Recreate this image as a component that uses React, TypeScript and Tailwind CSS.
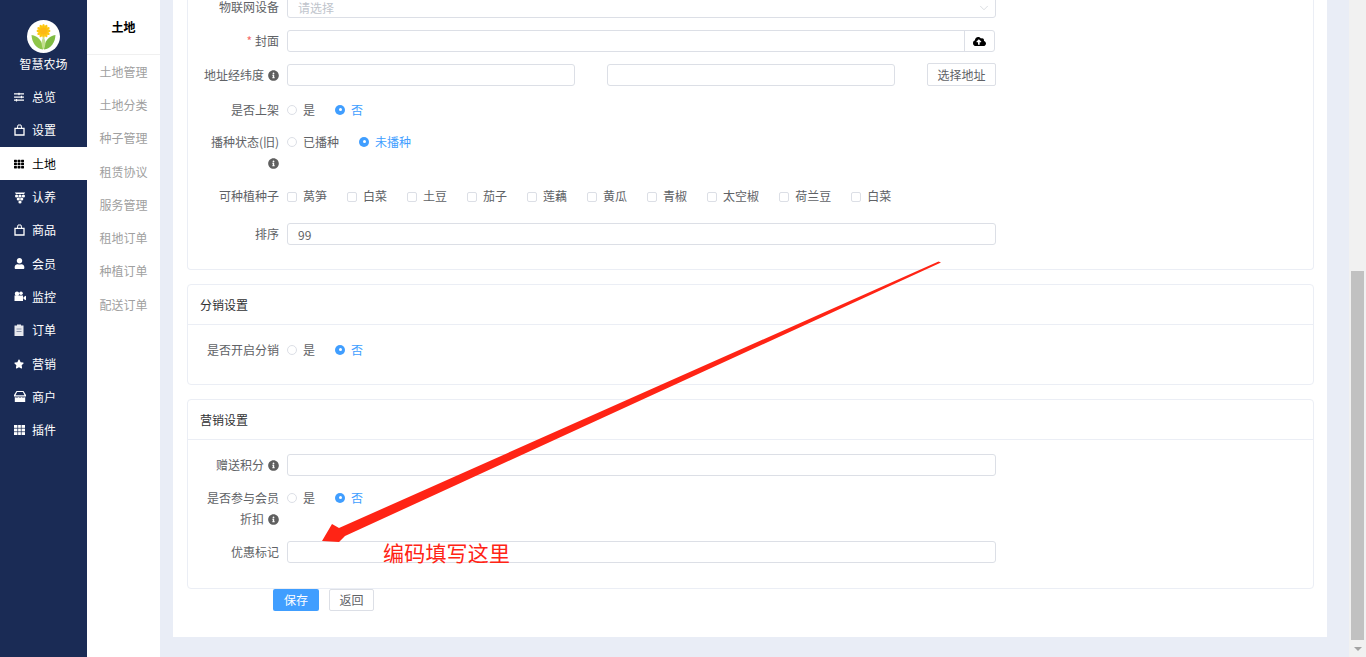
import React from "react";
import { FaSlidersH, FaTh, FaUser, FaStar, FaInfoCircle, FaCloudUploadAlt } from "react-icons/fa";
import { ChevronDown } from "lucide-react";

const Bag = () => (
  <svg viewBox="0 0 11 12" className="h-[12px] w-[11px]" fill="none" stroke="currentColor">
    <path d="M1 4.300h9v6.700H1z" strokeWidth="1.300" />
    <path d="M3.300 4.300 4 1h3l.7 3.300" strokeWidth="1" />
  </svg>
);
const Grape = () => (
  <svg viewBox="0 0 12 13" className="h-[13px] w-[12px]" fill="currentColor">
    <path d="M.8 1.500h10.400L10 3H2z" />
    <circle cx="2.600" cy="5" r="1.600" /><circle cx="6" cy="5" r="1.600" /><circle cx="9.400" cy="5" r="1.600" />
    <circle cx="4.300" cy="8" r="1.600" /><circle cx="7.700" cy="8" r="1.600" /><circle cx="6" cy="11" r="1.600" />
  </svg>
);
const Store = () => (
  <svg viewBox="0 0 12 11" className="h-[11px] w-[12px]" fill="currentColor">
    <path d="M2.500 0h7l2.500 4v1.500H0V4zM3.100 1.100 1.500 4.200h9L8.900 1.100z" />
    <path d="M.8 6c1.300.8 2.800.8 3.600 0 .9.8 2.300.8 3.200 0 .8.8 2.300.8 3.600 0v5H.8z" />
  </svg>
);
const Camera = () => (
  <svg viewBox="0 0 12 11" className="h-[11px] w-[12px]" fill="currentColor">
    <circle cx="3" cy="2.800" r="2.200" /><circle cx="7" cy="2.300" r="1.800" />
    <path d="M.5 4.500h8.500v5.500H.5z" />
    <path d="M9.500 6 12 4.800v4.400L9.500 8z" />
  </svg>
);
const Clip = () => (
  <svg viewBox="0 0 10 12" className="h-[12px] w-[10px]">
    <path d="M.5 1.500h2.500V.5h4v1h2.500V12H.5z" fill="#e6e8ee" />
    <path d="M2.500 5h5M2.500 7.500h5" stroke="#8a93aa" strokeWidth="1" />
  </svg>
);
const Grid = () => (
  <svg viewBox="0 0 11 10" className="h-[10px] w-[11px]">
    <path d="M0 0h11v10H0z" fill="#fff" />
    <path d="M3.700 0v10M7.300 0v10M0 3.300h11M0 6.700h11" stroke="#1a2b55" strokeWidth=".7" />
  </svg>
);

const navItems: [string, React.ReactNode][] = [
  ["总览", <FaSlidersH size={10} />],
  ["设置", <Bag />],
  ["土地", <FaTh size={10} />],
  ["认养", <Grape />],
  ["商品", <Bag />],
  ["会员", <FaUser size={11} />],
  ["监控", <Camera />],
  ["订单", <Clip />],
  ["营销", <FaStar size={10} />],
  ["商户", <Store />],
  ["插件", <Grid />],
];

const subItems = ["土地管理", "土地分类", "种子管理", "租赁协议", "服务管理", "租地订单", "种植订单", "配送订单"];
const seeds = ["莴笋", "白菜", "土豆", "茄子", "莲藕", "黄瓜", "青椒", "太空椒", "荷兰豆", "白菜"];

const Info = () => <FaInfoCircle size={11} className="ml-[4px] inline-block align-[-1px] text-[#5f5f5f]" />;

const Label = ({ children }: { children: React.ReactNode }) => (
  <div className="w-[80px] shrink-0 text-right text-[12px] leading-[21px] text-[#606266]">{children}</div>
);

const TextInput = ({ value, placeholder, className }: { value?: string; placeholder?: string; className: string }) => (
  <input
    readOnly
    value={value ?? ""}
    placeholder={placeholder}
    className={`block h-[22px] rounded-[3px] border border-[#dcdfe6] bg-white px-[10px] text-[12px] text-[#606266] outline-none placeholder:text-[#c0c4cc] ${className}`}
  />
);

const Radio = ({ label, checked }: { label: string; checked?: boolean }) => (
  <div className={`flex items-center gap-[6px] text-[12px] leading-[21px] ${checked ? "text-[#409eff]" : "text-[#606266]"}`}>
    {checked ? (
      <span className="flex h-[10px] w-[10px] items-center justify-center rounded-full bg-[#409eff]">
        <span className="h-[3px] w-[3px] rounded-full bg-white" />
      </span>
    ) : (
      <span className="h-[10px] w-[10px] rounded-full border border-[#dcdfe6] bg-white" />
    )}
    {label}
  </div>
);

const RadioGroup = ({ a, b }: { a: string; b: string }) => (
  <div className="flex items-center gap-[20px]">
    <Radio label={a} />
    <Radio label={b} checked />
  </div>
);

const Row = ({ label, children, className }: { label: React.ReactNode; children: React.ReactNode; className?: string }) => (
  <div className={`flex items-start gap-[8px] ${className ?? ""}`}>
    <Label>{label}</Label>
    {children}
  </div>
);

const Card = ({ title, children, className }: { title?: string; children: React.ReactNode; className?: string }) => (
  <div className={`rounded-[4px] border border-[#ebeef5] bg-white ${className ?? ""}`}>
    {title && (
      <div className="flex h-[40px] items-center border-b border-[#ebeef5] px-[12px] text-[12px] text-[#303133]">{title}</div>
    )}
    <div className="px-[11px]">{children}</div>
  </div>
);

const Logo = () => (
  <svg viewBox="0 0 33 33" className="h-[33px] w-[33px]">
    <circle cx="16.500" cy="16.500" r="16.500" fill="#fff" />
    {[0, 30, 60, 90, 120, 150, 180, 210, 240, 270, 300, 330].map((r) => (
      <ellipse key={r} cx="16.500" cy="6.500" rx="1.400" ry="2.500" fill="#fdc60f" transform={`rotate(${r} 16.500 11)`} />
    ))}
    <circle cx="16.500" cy="11" r="3.500" fill="#fcb814" />
    <path d="M16 29.500C9 29 4.800 22 4.500 15c6.500 1 11.500 6 11.500 14.500z" fill="#8fc649" />
    <path d="M17 29.500c7-.5 11.200-7.500 11.500-14.500C22 16 17 21 17 29.500z" fill="#7fbb42" />
    <path d="M16.500 29.500c-2.500-4-2.500-9 0-13 2.500 4 2.500 9 0 13z" fill="#c3df8e" />
  </svg>
);

export default function App() {
  return (
    <div className="relative flex h-[657px] w-[1366px] overflow-hidden bg-[#e9edf6] font-['Noto_Sans_CJK_SC',sans-serif]">
      {/* primary nav */}
      <aside className="flex w-[87px] shrink-0 flex-col bg-[#1a2b55] text-white">
        <div className="flex h-[80.500px] flex-col items-center pt-[20px]">
          <Logo />
          <div className="mt-[3px] text-[12px] leading-[16px]">智慧农场</div>
        </div>
        {navItems.map(([name, icon], i) => (
          <div
            key={i}
            className={`flex h-[33.300px] items-center text-[12px] ${name === "土地" ? "bg-white text-black" : "text-white"}`}
          >
            <span className="flex w-[32px] items-center pl-[14px]">{icon}</span>
            {name}
          </div>
        ))}
      </aside>

      {/* secondary nav */}
      <nav className="w-[73px] shrink-0 bg-white text-center">
        <div className="flex h-[55px] items-center justify-center border-b border-[#f0f0f0] text-[12px] font-bold text-black">土地</div>
        {subItems.map((s) => (
          <div key={s} className="flex h-[33.300px] items-center justify-center text-[12px] text-[#a0a0a0]">{s}</div>
        ))}
      </nav>

      {/* content */}
      <main className="min-w-0 flex-1 pl-[13px] pr-[22px]">
        <div className="-mt-[4px] h-[641px] bg-white pl-[14px] pr-[13px]">
          {/* base info */}
          <Card className="h-[274px] rounded-t-none border-t-0">
            <Row label="物联网设备">
              <div className="relative">
                <TextInput placeholder="请选择" className="w-[709px]" />
                <ChevronDown size={14} strokeWidth={1} className="absolute right-[5px] top-[5px] text-[#c0c4cc]" />
              </div>
            </Row>
            <Row label={<><span className="mr-[3px] text-[#f56c6c]">*</span>封面</>} className="mt-[12px]">
              <div className="flex h-[22px] w-[708px] rounded-[3px] border border-[#dcdfe6]">
                <div className="flex-1" />
                <div className="flex w-[30px] items-center justify-center border-l border-[#dcdfe6] text-black">
                  <FaCloudUploadAlt size={13} />
                </div>
              </div>
            </Row>
            <Row label={<>地址经纬度<Info /></>} className="mt-[12px]">
              <TextInput className="w-[288px]" />
              <TextInput className="ml-[24px] w-[288px]" />
              <button className="ml-[24px] -mt-[1px] h-[23px] w-[69px] rounded-[2px] border border-[#dcdfe6] bg-white text-[12px] text-[#606266]">选择地址</button>
            </Row>
            <Row label="是否上架" className="mt-[13px]">
              <RadioGroup a="是" b="否" />
            </Row>
            <Row label={<>播种状态(旧)<Info /></>} className="mt-[11px]">
              <RadioGroup a="已播种" b="未播种" />
            </Row>
            <Row label="可种植种子" className="mt-[12px]">
              <div className="flex gap-[20px]">
                {seeds.map((s, i) => (
                  <div key={i} className="flex items-center gap-[5px] text-[12px] leading-[21px] text-[#606266]">
                    <span className="mr-[1px] mt-[2px] h-[10px] w-[10px] rounded-[2px] border border-[#dcdfe6] bg-white" />
                    {s}
                  </div>
                ))}
              </div>
            </Row>
            <Row label="排序" className="mt-[17px]">
              <TextInput value="99" className="w-[709px]" />
            </Row>
          </Card>

          <Card title="分销设置" className="mt-[14px] h-[101px]">
            <Row label="是否开启分销" className="mt-[14px]">
              <RadioGroup a="是" b="否" />
            </Row>
          </Card>

          <Card title="营销设置" className="mt-[14px] h-[190px]">
            <Row label={<>赠送积分<Info /></>} className="mt-[14px]">
              <TextInput className="w-[709px]" />
            </Row>
            <Row label={<>是否参与会员折扣<Info /></>} className="mt-[11px]">
              <RadioGroup a="是" b="否" />
            </Row>
            <Row label="优惠标记" className="mt-[12px]">
              <TextInput className="w-[709px]" />
            </Row>
          </Card>

          <div className="flex gap-[10px] pl-[86px]">
            <button className="h-[22px] w-[46px] rounded-[2px] bg-[#409eff] text-[12px] text-white">保存</button>
            <button className="h-[22px] w-[45px] rounded-[2px] border border-[#dcdfe6] bg-white text-[12px] text-[#606266]">返回</button>
          </div>
        </div>
      </main>

      {/* scrollbar */}
      <div className="flex h-full w-[17px] shrink-0 flex-col items-center bg-[#f1f1f1] pt-[271px]">
        <div className="h-[369px] w-[13px] bg-[#c1c1c1]" />
        <svg viewBox="0 0 8 4" className="mt-[7px] h-[4px] w-[8px]"><path d="M0 0h8L4 4z" fill="#a3a3a3" /></svg>
      </div>

      {/* annotation */}
      <svg className="pointer-events-none absolute left-0 top-0 h-[657px] w-[1366px]" viewBox="0 0 1366 657">
        <polygon
          points="941,262.500 938.500,261.500 339,528 332,524 322,541 339,542 345,536"
          fill="#ff2415"
        />
      </svg>
      <div className="pointer-events-none absolute left-[383px] top-[537px] text-[21px] leading-[30px] tracking-[0.2px] text-[#ff2415]">编码填写这里</div>
    </div>
  );
}
